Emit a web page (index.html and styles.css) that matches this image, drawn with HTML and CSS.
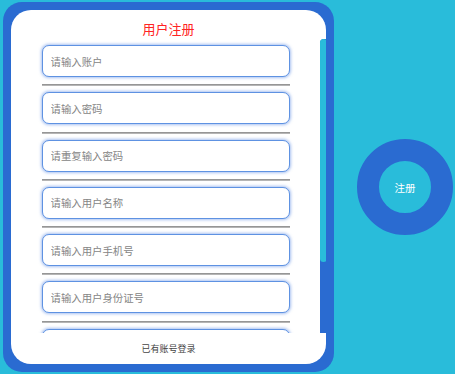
FILE: index.html
```html
<!DOCTYPE html>
<html lang="zh-CN">
<head>
<meta charset="utf-8">
<title>用户注册</title>
<link rel="stylesheet" href="styles.css">
</head>
<body>
<div class="page">
  <div class="card">
    <div class="panel">
      <h1 class="title">用户注册</h1>
      <div class="scroll-area">
        <div class="viewport">
          <form class="fields">
            <div class="field"><input class="input" type="text" placeholder="请输入账户"><div class="sep"></div></div>
            <div class="field"><input class="input" type="password" placeholder="请输入密码"><div class="sep"></div></div>
            <div class="field"><input class="input" type="password" placeholder="请重复输入密码"><div class="sep"></div></div>
            <div class="field"><input class="input" type="text" placeholder="请输入用户名称"><div class="sep"></div></div>
            <div class="field"><input class="input" type="text" placeholder="请输入用户手机号"><div class="sep"></div></div>
            <div class="field"><input class="input" type="text" placeholder="请输入用户身份证号"><div class="sep"></div></div>
            <div class="field"><input class="input" type="text" placeholder="请输入用户邮箱"><div class="sep"></div></div>
            <div class="field"><input class="input" type="text" placeholder="请输入用户地址"><div class="sep"></div></div>
          </form>
        </div>
        <div class="scrollbar"><div class="thumb"></div></div>
      </div>
      <div class="footer"><a class="login-link">已有账号登录</a></div>
    </div>
  </div>
  <button class="register" type="button">注册</button>
</div>
</body>
</html>
```

FILE: styles.css
```css
html, body {
  margin: 0;
  padding: 0;
  height: 100%;
  background: #29bcda;
  font-family: "Noto Sans CJK SC", "Noto Sans", sans-serif;
}

.page {
  display: flex;
  align-items: center;
  gap: 23px;
  padding: 2px 3px;
}

.card {
  box-sizing: border-box;
  flex: 0 0 331px;
  width: 331px;
  height: 370px;
  padding: 8px;
  background: #2a6bd1;
  border-radius: 19px;
  display: flex;
}

.panel {
  flex: 1;
  background: #ffffff;
  border-radius: 20px;
  display: flex;
  flex-direction: column;
  overflow: hidden;
}

.title {
  margin: 0;
  padding: 11px 0 2px;
  font-size: 13px;
  line-height: 16px;
  font-weight: normal;
  color: #ff2323;
  text-align: center;
}

.scroll-area {
  height: 294px;
  display: flex;
}

.viewport {
  flex: 1;
  overflow: hidden;
}

.scrollbar {
  flex: 0 0 7px;
  margin-right: -1px;
  background: #2a6bd1;
  border-radius: 4px 0 0 0;
}

.thumb {
  height: 223px;
  background: #29bcda;
  border-radius: 4px;
}

.fields {
  margin: 0;
  padding: 6px 0 4px;
  display: flex;
  flex-direction: column;
  align-items: center;
}

.field {
  width: 248px;
  display: flex;
  flex-direction: column;
}

.input {
  box-sizing: border-box;
  width: 248px;
  height: 32px;
  margin: 0;
  padding: 0 8px;
  border: 1px solid #5e92e2;
  border-radius: 7px;
  box-shadow: 0 0 3px 1px rgba(96, 142, 228, 0.55);
  background: #fff;
  font-family: "Noto Sans CJK SC", "Noto Sans", sans-serif;
  font-size: 10.4px;
  color: #333;
  outline: none;
}

.input::placeholder {
  color: #858585;
}

.sep {
  height: 0;
  margin: 7.3px 0 6px;
  border-top: 1px solid #969696;
  border-bottom: 1px solid #b5b5b5;
}

.footer {
  flex: 1;
  display: flex;
  align-items: center;
  justify-content: center;
}

.login-link {
  font-size: 9px;
  color: #444;
  cursor: pointer;
}

.register {
  box-sizing: border-box;
  flex: 0 0 96px;
  width: 96px;
  height: 96px;
  padding: 0;
  border: 22px solid #2a6bd1;
  border-radius: 50%;
  background: #29bcda;
  color: #ffffff;
  font-family: "Noto Sans CJK SC", "Noto Sans", sans-serif;
  font-size: 10.5px;
  display: flex;
  align-items: center;
  justify-content: center;
  cursor: pointer;
}
```
